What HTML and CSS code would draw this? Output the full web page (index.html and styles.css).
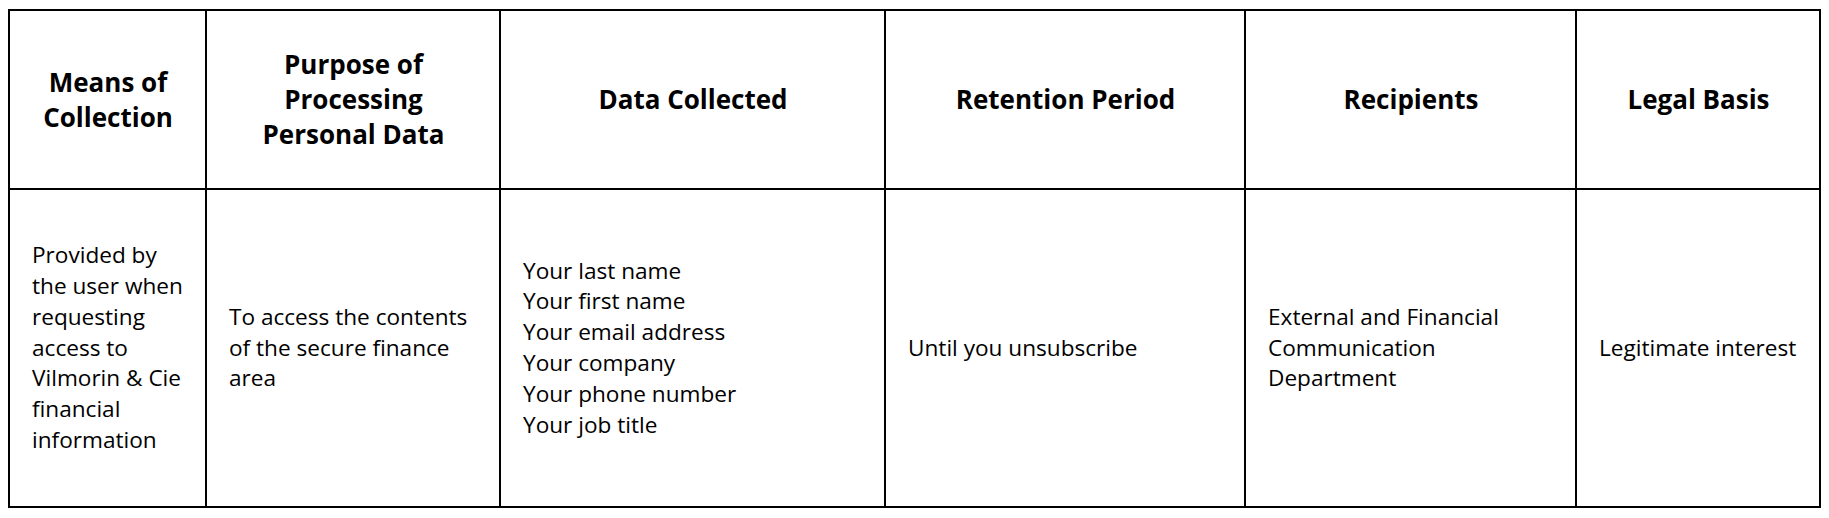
FILE: index.html
```html
<!DOCTYPE html>
<html lang="en">
<head>
<meta charset="utf-8">
<title>Personal data processing</title>
<link rel="stylesheet" href="styles.css">
</head>
<body>
<table class="data-table">
  <colgroup>
    <col class="c1"><col class="c2"><col class="c3"><col class="c4"><col class="c5"><col class="c6">
  </colgroup>
  <thead>
    <tr class="head-row">
      <th>Means of Collection</th>
      <th>Purpose of Processing Personal Data</th>
      <th>Data Collected</th>
      <th>Retention Period</th>
      <th>Recipients</th>
      <th>Legal Basis</th>
    </tr>
  </thead>
  <tbody>
    <tr class="body-row">
      <td>Provided by the user when requesting access to Vilmorin &amp; Cie financial information</td>
      <td>To access the contents of the secure finance area</td>
      <td>Your last name<br>Your first name<br>Your email address<br>Your company<br>Your phone number<br>Your job title</td>
      <td>Until you unsubscribe</td>
      <td>External and Financial Communication Department</td>
      <td>Legitimate interest</td>
    </tr>
  </tbody>
</table>
</body>
</html>
```
FILE: styles.css
```css
html, body {
  margin: 0;
  padding: 0;
  background: #fff;
}

body {
  padding: 9px 0 0 8px;
  font-family: "Open Sans", "Liberation Sans", sans-serif;
  color: #000;
}

.data-table {
  border-collapse: collapse;
  table-layout: fixed;
  width: 1811px;
}

.c1 { width: 197px; }
.c2 { width: 294px; }
.c3 { width: 385px; }
.c4 { width: 360px; }
.c5 { width: 331px; }
.c6 { width: 244px; }

.data-table th,
.data-table td {
  border: 2px solid #000;
  padding: 0 21px 0 22px;
  vertical-align: middle;
}

.data-table th {
  font-size: 26px;
  line-height: 35px;
  font-weight: 700;
  text-align: center;
}

.data-table td {
  font-size: 22.6px;
  line-height: 30.8px;
  font-weight: 400;
  text-align: left;
}

.head-row { height: 179px; }
.body-row { height: 318px; }
```
